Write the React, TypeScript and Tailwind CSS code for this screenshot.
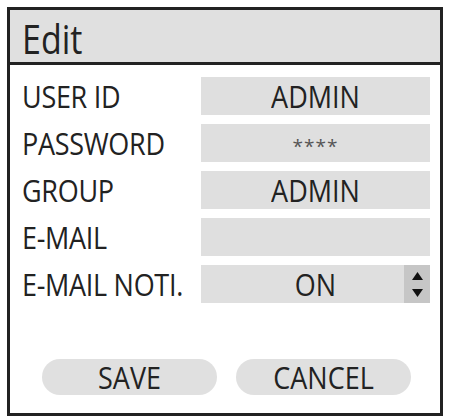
import type { ReactNode } from "react";

const font = { fontFamily: '"Open Sans", "Noto Sans", sans-serif' };

const text = "text-[27px] leading-none text-[#222] scale-y-[1.12]";

function Field({ label, children }: { label: string; children: ReactNode }) {
  return (
    <div className="flex items-center">
      <div className="w-[191px] pl-[12px]">
        <p className={text + " whitespace-nowrap tracking-[-0.3px] origin-left"}>{label}</p>
      </div>
      {children}
    </div>
  );
}

function Box({ children }: { children?: ReactNode }) {
  return (
    <div className="w-[229px] h-[38px] bg-[#dfdfdf] flex items-center justify-center">
      {children}
    </div>
  );
}

function Spinner() {
  return (
    <div className="w-[26px] h-full bg-[#c6c6c6] flex flex-col items-center justify-center gap-[9px]">
      <svg width="11" height="8" viewBox="0 0 11 8">
        <path d="M5.5 0 L11 8 L0 8 Z" fill="#111" />
      </svg>
      <svg width="11" height="8" viewBox="0 0 11 8">
        <path d="M0 0 L11 0 L5.5 8 Z" fill="#111" />
      </svg>
    </div>
  );
}

export default function App() {
  return (
    <div className="w-[449px] h-[417px] bg-white pt-[7px] pl-[7px]" style={font}>
      <div className="w-[436px] h-[409px] border-[3px] border-[#222] flex flex-col">
        {/* title bar */}
        <div className="h-[55px] bg-[#e0e0e0] border-b-[3px] border-[#222] flex items-center pl-[12px]">
          <p className="text-[34px] leading-none text-[#222] pt-[3px] scale-y-[1.2] origin-left">Edit</p>
        </div>

        {/* fields */}
        <div className="flex flex-col gap-[9px] pt-[12px]">
          <Field label="USER ID">
            <Box>
              <span className={text}>ADMIN</span>
            </Box>
          </Field>
          <Field label="PASSWORD">
            <Box>
              <span className="text-[19px] leading-none text-[#555] tracking-[1px] pt-[6px]">****</span>
            </Box>
          </Field>
          <Field label="GROUP">
            <Box>
              <span className={text}>ADMIN</span>
            </Box>
          </Field>
          <Field label="E-MAIL">
            <Box />
          </Field>
          <Field label="E-MAIL NOTI.">
            <div className="w-[229px] h-[38px] bg-[#dfdfdf] flex items-center">
              <span className="flex-1 flex justify-center pl-[26px]">
                <span className={text}>ON</span>
              </span>
              <Spinner />
            </div>
          </Field>
        </div>

        {/* actions */}
        <div className="mt-auto mb-[18px] flex justify-center gap-[19px] pl-[3px]">
          <button className="w-[175px] h-[36px] rounded-full bg-[#e0e0e0] flex items-center justify-center">
            <span className={text}>SAVE</span>
          </button>
          <button className="w-[175px] h-[36px] rounded-full bg-[#e0e0e0] flex items-center justify-center">
            <span className={text}>CANCEL</span>
          </button>
        </div>
      </div>
    </div>
  );
}
